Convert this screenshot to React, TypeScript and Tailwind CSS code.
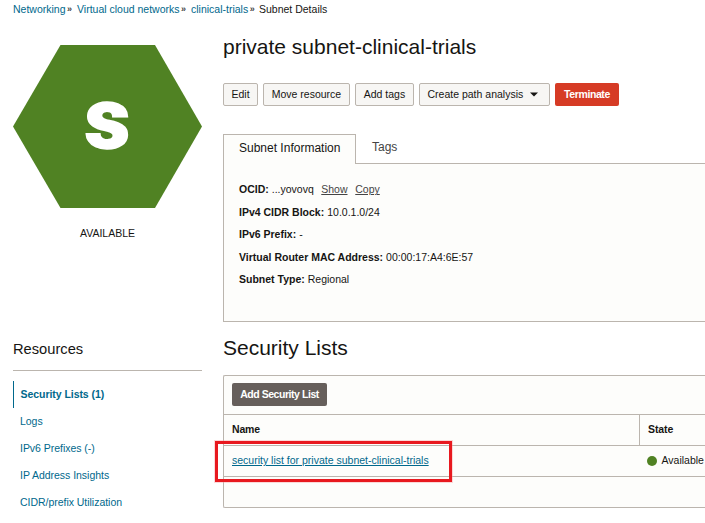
import React from "react";

function Crumb({ label, width }: { label: string; width: string }) {
  return (
    <span className={`flex items-center gap-[1.5px] text-[#00688c] ${width}`}>
      <span>{label}</span>
      <b className="pt-px text-[9px] text-[#444]">»</b>
    </span>
  );
}

function Crumbs() {
  return (
    <nav className="flex h-[18px] items-center pt-px pl-[13px] text-[10.5px] whitespace-nowrap">
      <Crumb label="Networking" width="w-[64px]" />
      <Crumb label="Virtual cloud networks" width="w-[114px]" />
      <Crumb label="clinical-trials" width="w-[68px]" />
      <span>Subnet Details</span>
    </nav>
  );
}

function Button({ label, width }: { label: string; width: string }) {
  return (
    <button className={`h-[23px] shrink-0 rounded-[2px] border border-[#bbb5ae] bg-[#f7f6f4] whitespace-nowrap ${width}`}>
      {label}
    </button>
  );
}

function Field({ label, value }: { label: string; value: React.ReactNode }) {
  return (
    <div className="flex h-[22.5px] items-center whitespace-nowrap">
      <b className="mr-[3px] font-bold">{label}</b>
      {value}
    </div>
  );
}

function Sidebar() {
  const links = ["Logs", "IPv6 Prefixes (-)", "IP Address Insights", "CIDR/prefix Utilization"];
  return (
    <aside className="flex w-[189px] shrink-0 flex-col">
      <svg className="mt-[27px] h-[163px] w-[189px]" viewBox="0 0 189 163">
        <path d="M47.5 0H142L189 81.5L142 163H47.5L0 81.5Z" fill="#508223" />
        <text
          transform="translate(94.3 103.2) scale(1.04 1)"
          textAnchor="middle"
          fill="#fff"
          stroke="#fff"
          strokeWidth="1.5"
          fontFamily="Roboto, sans-serif"
          fontWeight="900"
          fontSize="85"
        >
          s
        </text>
      </svg>
      <div className="mt-[17px] h-[16px] text-center leading-[16px]">AVAILABLE</div>
      <h2 className="mt-[97px] h-[22px] text-[14.7px] leading-[22px]">Resources</h2>
      <div className="mt-[10px] h-px bg-[#bbb5ae]" />
      <ul className="mt-[10px] text-[#00688c]">
        <li className="flex h-[27px] items-center border-l border-[#00688c] pl-[6.5px] font-bold tracking-[-0.05px]">Security Lists (1)</li>
        {links.map((l) => (
          <li key={l} className="flex h-[27px] items-center pl-[7px] tracking-[-0.03px]">{l}</li>
        ))}
      </ul>
    </aside>
  );
}

export default function App() {
  return (
    <div className="relative h-[523px] w-[705px] overflow-hidden bg-white font-['Liberation_Sans',Arial,sans-serif] text-[10.5px] text-[#161513]">
      <Crumbs />
      <div className="flex pl-[13px]">
        <Sidebar />
        <main className="ml-[21px] flex min-w-0 flex-1 flex-col">
          <h1 className="mt-[16px] h-[26px] text-[21px] leading-[26px] whitespace-nowrap">private subnet-clinical-trials</h1>
          <div className="mt-[23px] flex gap-[5px]">
            <Button label="Edit" width="w-[35px]" />
            <Button label="Move resource" width="w-[87px]" />
            <Button label="Add tags" width="w-[59px]" />
            <button className="flex h-[23px] w-[131px] items-center rounded-[2px] border border-[#bbb5ae] bg-[#f7f6f4] pl-[7.5px] whitespace-nowrap">
              Create path analysis
              <svg className="ml-[7px] h-[5px] w-[8px]" viewBox="0 0 8 5"><path d="M0 .5H8L4 4.5Z" fill="#161513" /></svg>
            </button>
            <button className="h-[23px] w-[64px] rounded-[2px] bg-[#d63b25] font-bold tracking-[-0.4px] text-white">Terminate</button>
          </div>
          <div className="mt-[28px] flex h-[30px] text-[12px]">
            <div className="relative z-10 flex h-[30px] w-[133px] items-center border-x border-t border-[#bbb5ae] bg-[#fdfdfb] pb-[3px] pl-[15px] whitespace-nowrap">Subnet Information</div>
            <div className="pt-[3px] pl-[16px] leading-[20px] text-[#444]">Tags</div>
          </div>
          <section className="-mt-px h-[159px] border-y border-l border-[#bbb5ae] bg-[#fdfdfb] pt-[15px] pl-[15px]">
            <Field
              label="OCID:"
              value={<><span className="w-[49.5px]">...yovovq</span><u className="w-[34px] text-[#444] underline-offset-1">Show</u><u className="text-[#444] underline-offset-1">Copy</u></>}
            />
            <Field label="IPv4 CIDR Block:" value="10.0.1.0/24" />
            <Field label="IPv6 Prefix:" value="-" />
            <Field label="Virtual Router MAC Address:" value="00:00:17:A4:6E:57" />
            <Field label="Subnet Type:" value="Regional" />
          </section>
          <h2 className="mt-[13px] h-[26px] text-[21px] leading-[26px]">Security Lists</h2>
          <section className="mt-[14px] h-[133px] rounded-l-[2px] border-y border-l border-[#bbb5ae] bg-[#fdfdfb]">
            <div className="h-[38px] pt-[7px] pl-[8px]">
              <button className="h-[23px] w-[95px] rounded-[2px] bg-[#665f5b] font-bold tracking-[-0.45px] whitespace-nowrap text-white">Add Security List</button>
            </div>
            <div className="flex h-[31px] items-center border-t border-[#bbb5ae] font-bold">
              <span className="w-[415px] pl-[8px] tracking-[-0.2px]">Name</span>
              <span className="flex h-[30px] flex-1 items-center border-l border-[#bbb5ae] pl-[8px] tracking-[-0.1px]">State</span>
            </div>
            <div className="flex h-[32px] items-center border-y border-[#bbb5ae]">
              <span className="w-[415px] pl-[8px] text-[#00688c] underline underline-offset-1">security list for private subnet-clinical-trials</span>
              <span className="flex items-center pl-[8px]"><i className="mr-[4.5px] size-[10px] rounded-full bg-[#508223]" />Available</span>
            </div>
          </section>
        </main>
      </div>
      <div className="absolute top-[441px] left-[215px] h-[41px] w-[237px] border-[3px] border-[#e8191f] outline outline-[#f7a0a2]/40" />
    </div>
  );
}
